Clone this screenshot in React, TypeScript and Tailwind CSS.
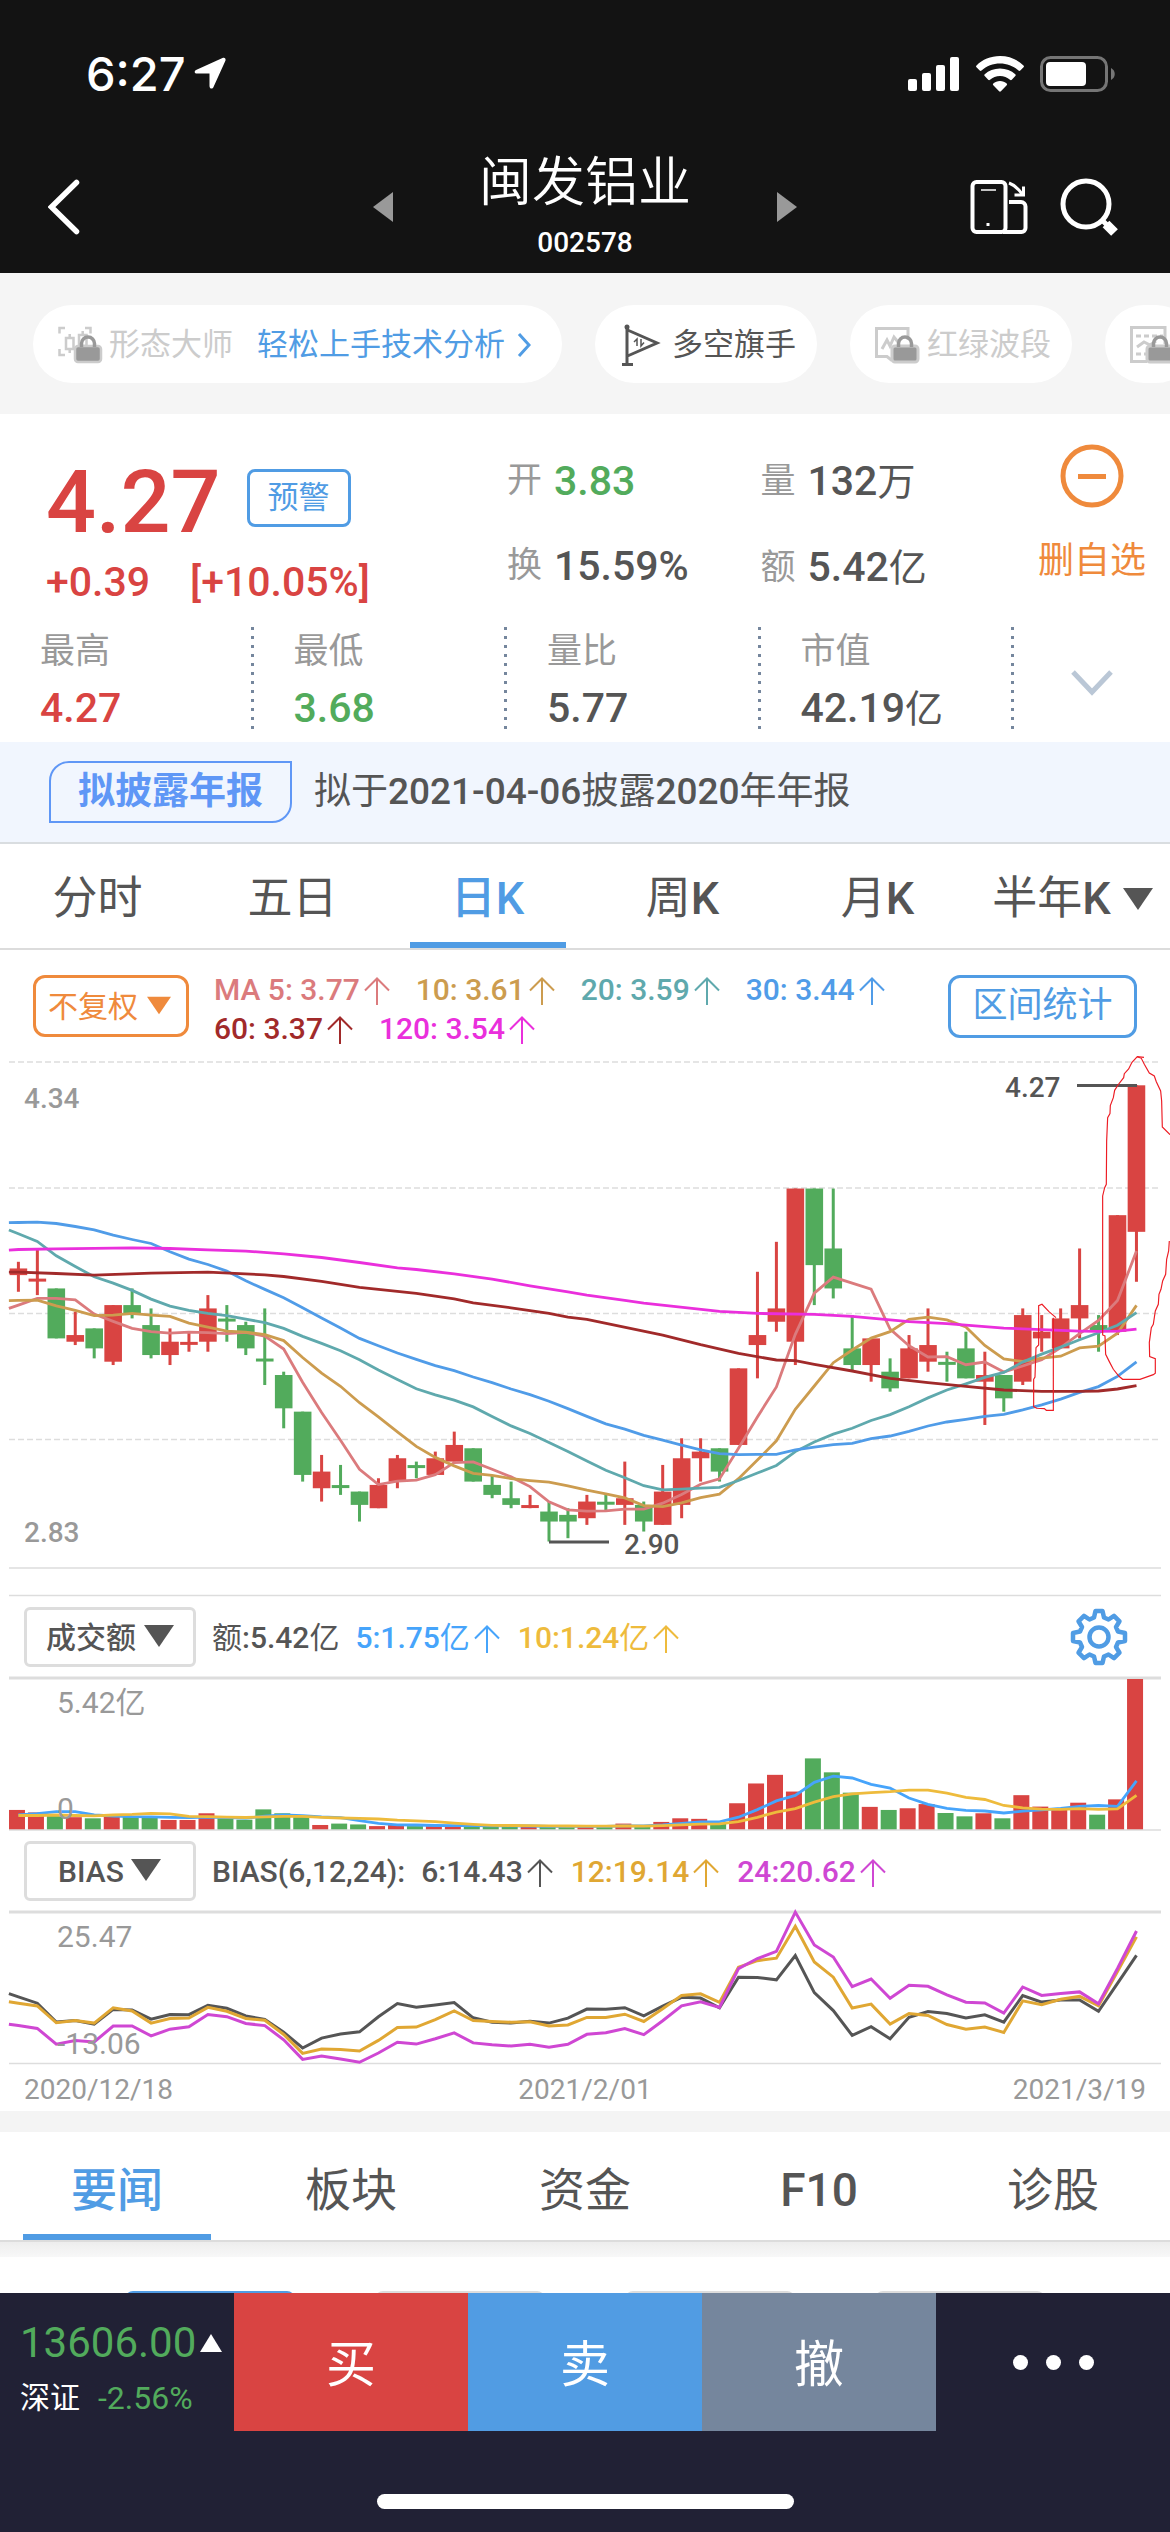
import React, { useState } from 'react';

type Candle = ['r' | 'g', number, number, number, number, number];

// colour, body top, body bottom, high, low, turnover
const CANDLES: Candle[] = [
  ['r', 3.72, 3.7, 3.74, 3.65, 0.72],
  ['r', 3.685, 3.685, 3.78, 3.64, 0.63],
  ['g', 3.66, 3.51, 3.66, 3.51, 0.5],
  ['r', 3.52, 3.5, 3.59, 3.49, 0.46],
  ['g', 3.54, 3.48, 3.54, 3.45, 0.42],
  ['r', 3.61, 3.44, 3.61, 3.43, 0.51],
  ['g', 3.61, 3.58, 3.66, 3.57, 0.5],
  ['g', 3.55, 3.46, 3.6, 3.45, 0.47],
  ['r', 3.5, 3.46, 3.54, 3.43, 0.36],
  ['r', 3.495, 3.495, 3.53, 3.47, 0.36],
  ['r', 3.6, 3.5, 3.64, 3.47, 0.6],
  ['g', 3.565, 3.565, 3.61, 3.5, 0.42],
  ['g', 3.55, 3.48, 3.56, 3.46, 0.37],
  ['g', 3.445, 3.445, 3.6, 3.37, 0.74],
  ['g', 3.4, 3.3, 3.41, 3.24, 0.6],
  ['g', 3.29, 3.1, 3.29, 3.08, 0.46],
  ['r', 3.11, 3.06, 3.16, 3.02, 0.18],
  ['g', 3.065, 3.065, 3.13, 3.04, 0.23],
  ['g', 3.05, 3.01, 3.05, 2.96, 0.2],
  ['r', 3.07, 3.0, 3.09, 3.0, 0.14],
  ['r', 3.15, 3.08, 3.16, 3.06, 0.19],
  ['g', 3.125, 3.125, 3.14, 3.09, 0.14],
  ['r', 3.15, 3.1, 3.17, 3.1, 0.14],
  ['r', 3.19, 3.14, 3.23, 3.14, 0.18],
  ['g', 3.18, 3.08, 3.18, 3.08, 0.14],
  ['g', 3.07, 3.04, 3.1, 3.03, 0.14],
  ['g', 3.03, 3.01, 3.08, 3.0, 0.13],
  ['r', 3.005, 3.005, 3.04, 3.0, 0.13],
  ['g', 2.99, 2.96, 3.02, 2.9, 0.13],
  ['g', 2.98, 2.96, 3.0, 2.91, 0.13],
  ['r', 3.02, 2.97, 3.04, 2.95, 0.13],
  ['g', 3.015, 3.015, 3.04, 2.99, 0.12],
  ['r', 3.03, 3.01, 3.14, 2.95, 0.23],
  ['g', 3.01, 2.96, 3.02, 2.93, 0.12],
  ['r', 3.05, 2.95, 3.13, 2.95, 0.29],
  ['r', 3.15, 3.01, 3.21, 2.97, 0.42],
  ['r', 3.17, 3.15, 3.21, 3.08, 0.4],
  ['g', 3.18, 3.11, 3.18, 3.08, 0.22],
  ['r', 3.42, 3.19, 3.42, 3.19, 0.96],
  ['r', 3.52, 3.49, 3.71, 3.39, 1.67],
  ['r', 3.6, 3.56, 3.8, 3.53, 1.98],
  ['r', 3.96, 3.5, 3.96, 3.43, 1.38],
  ['g', 3.96, 3.73, 3.96, 3.61, 2.57],
  ['g', 3.78, 3.66, 3.96, 3.63, 2.07],
  ['g', 3.48, 3.43, 3.58, 3.41, 1.34],
  ['r', 3.51, 3.43, 3.51, 3.38, 0.83],
  ['g', 3.41, 3.36, 3.45, 3.35, 0.72],
  ['r', 3.48, 3.39, 3.52, 3.39, 0.78],
  ['r', 3.49, 3.44, 3.6, 3.41, 0.93],
  ['g', 3.435, 3.435, 3.47, 3.38, 0.61],
  ['g', 3.48, 3.39, 3.53, 3.39, 0.49],
  ['r', 3.4, 3.38, 3.47, 3.25, 0.6],
  ['g', 3.4, 3.33, 3.4, 3.29, 0.42],
  ['r', 3.58, 3.38, 3.6, 3.37, 1.25],
  ['r', 3.53, 3.51, 3.58, 3.47, 0.84],
  ['r', 3.57, 3.48, 3.6, 3.48, 0.77],
  ['r', 3.61, 3.57, 3.78, 3.51, 0.98],
  ['g', 3.55, 3.53, 3.58, 3.47, 0.55],
  ['r', 3.88, 3.53, 3.88, 3.52, 1.1],
  ['r', 4.27, 3.83, 4.27, 3.68, 5.42],
];

const CLOSES = CANDLES.map(c => (c[0] === 'r' ? c[1] : c[2]));
const AMOUNTS = CANDLES.map(c => c[5]);

const RED = '#d94442';
const GREEN = '#52ab5c';
const STEP = 18.95;

const mean = (list: number[], i: number, n: number) =>
  list.slice(i - n + 1, i + 1).reduce((a, b) => a + b, 0) / n;

// The first values need older sessions, so they come in as a seed
const average = (list: number[], n: number, seed: number[]) =>
  list.map((_, i) => (i < n - 1 ? seed[i] : mean(list, i, n)));

const bias = (n: number, seed: number[]) =>
  CLOSES.map((c, i) => (i < n - 1 ? seed[i] : (c / mean(CLOSES, i, n) - 1) * 100));

const MA5 = average(CLOSES, 5, [3.61, 3.63, 3.63, 3.626]);
const MA10 = average(CLOSES, 10, [3.624, 3.625, 3.608, 3.594, 3.578, 3.58, 3.585, 3.58, 3.576]);
const MA20 = average(CLOSES, 20, [
  3.824, 3.801, 3.758, 3.726, 3.695, 3.676, 3.654, 3.628, 3.607, 3.594,
  3.585, 3.578, 3.568, 3.557, 3.54, 3.516, 3.495, 3.473, 3.446,
]);
const MA30 = average(CLOSES, 30, [
  3.858, 3.859, 3.855, 3.846, 3.836, 3.82, 3.807, 3.795, 3.77, 3.748,
  3.732, 3.712, 3.683, 3.657, 3.632, 3.602, 3.571, 3.541, 3.51, 3.488,
  3.466, 3.447, 3.428, 3.413, 3.394, 3.377, 3.358, 3.341, 3.321,
]);

type Point = [number, number];

const MA60: Point[] = [
  [-0.5, 3.709], [0, 3.709], [2, 3.705], [4, 3.7], [7, 3.706], [10, 3.709], [13, 3.701], [14, 3.696],
  [16, 3.681], [18, 3.663], [21, 3.645], [23, 3.629], [24, 3.617], [26, 3.602], [28, 3.585],
  [29, 3.574], [30, 3.567], [34, 3.52], [36, 3.491], [38, 3.465], [40, 3.445], [41, 3.443],
  [42, 3.432], [44, 3.412], [46, 3.39], [48, 3.377], [50, 3.366], [52, 3.355], [54, 3.351],
  [56, 3.351], [57, 3.352], [58, 3.358], [59, 3.368],
];
const MA120: Point[] = [
  [-0.5, 3.775], [0, 3.777], [2, 3.779], [6, 3.782], [8, 3.78], [10, 3.776], [12, 3.772], [14, 3.764],
  [16, 3.753], [18, 3.738], [20, 3.722], [21, 3.717], [23, 3.704], [25, 3.688], [27, 3.668],
  [29, 3.65], [30, 3.64], [32, 3.624], [33, 3.616], [37, 3.591], [39, 3.585], [42, 3.582],
  [44, 3.576], [45, 3.571], [47, 3.56], [49, 3.554], [52, 3.541], [54, 3.536], [56, 3.532],
  [57, 3.531], [58, 3.532], [59, 3.538],
];

const BIAS6 = bias(6, [3.84, 2.21, -2.61, -2.24, -3.15]);
const BIAS12 = bias(12, [2.21, 1.48, -2.79, -2.24, -2.88, 1.03, 0.21, -2.88, -1.7, -1.61, 1.12]);
const BIAS24 = bias(24, [
  -3.52, -4.24, -8.24, -7.33, -7.7, -3.61, -3.61, -6.15, -4.43, -3.79, -0.7, -1.25,
  -2.97, -3.52, -7.15, -12.15, -11.24, -12.06, -12.88, -10.51, -7.79, -8.24, -6.88,
]);

const AMOUNT5 = average(AMOUNTS, 5, [0.54, 0.59, 0.66, 0.66]);
const AMOUNT10 = average(AMOUNTS, 10, [0.52, 0.52, 0.54, 0.52, 0.51, 0.54, 0.56, 0.6, 0.58]);

const cx = (i: number) => 18.4 + i * STEP;
const priceY = (p: number) => (4.34 - p) * 333;
const amountY = (a: number) => 152 - (a / 5.42) * 151;
const biasY = (b: number) => ((25.47 - b) / 38.53) * 151;

const toPoints = (list: Point[], y: (v: number) => number) =>
  list.map(([i, v]) => `${cx(i).toFixed(1)},${y(v).toFixed(1)}`).join(' ');

const indexed = (list: number[]): Point[] => list.map((v, i) => [i, v] as Point);

// Extends a line half a step to the left edge of the pane
const toEdge = (list: number[]): Point[] => [
  [-0.5, list[0] - (list[1] - list[0]) / 2],
  ...indexed(list),
];

// Figures are medium weight, Chinese characters stay regular
const Mixed: React.FC<{ text: string }> = ({ text }) => (
  <>
    {text.split(/([\u4e00-\u9fff]+)/).filter(Boolean).map((part, i) => (
      <span key={i} className={/[\u4e00-\u9fff]/.test(part) ? 'font-normal' : 'font-medium'}>{part}</span>
    ))}
  </>
);

const Reading: React.FC<{ text: string; tone?: string; up?: boolean }> = ({ text, tone = '', up = true }) => (
  <span className={`whitespace-nowrap ${tone}`}>
    <Mixed text={text} />
    {up && (
      <svg viewBox="0 0 26 28" className="ml-1 mr-0.5 inline-block h-7 w-[26px] align-[-5px]" fill="none" stroke="currentColor" strokeWidth="2" role="img" aria-label="上升">
        <path d="M13 28V2M1 13.500 13 1.500l12 12" />
      </svg>
    )}
  </span>
);

const Triangle: React.FC<{ className?: string }> = ({ className }) => (
  <svg viewBox="0 0 30 22" className={className} fill="currentColor" aria-hidden="true">
    <path d="M0 0h30L15 22z" />
  </svg>
);

const Lock = () => (
  <g fill="#999">
    <rect x="18" y="20" width="26" height="16" rx="3" />
    <path d="M24.500 21v-3.500a6.500 6.500 0 0 1 13 0V21" fill="none" stroke="#999" strokeWidth="3.500" />
  </g>
);

const StatusBar = () => (
  <div className="flex h-[147px] items-center justify-between pl-[86px] pr-[54px]">
    <div className="flex items-center gap-2">
      <span className="font-['Inter',sans-serif] text-[47px] font-medium leading-none">6:27</span>
      <svg viewBox="0 0 32 33" className="h-[33px] w-8" fill="#fff" aria-hidden="true">
        <path d="M28.500 1 2 13c-2 1-1.500 3.500.5 3.500h13V29c0 3 3 3.500 4 1L31.500 3.500C32 1.500 30.500 0 28.500 1z" />
      </svg>
    </div>
    <div className="flex items-center gap-4">
      <svg viewBox="0 0 52 34" className="h-[34px] w-[52px]" fill="#fff" aria-hidden="true">
        <rect x="0" y="22" width="9" height="12" rx="2" />
        <rect x="14" y="16" width="9" height="18" rx="2" />
        <rect x="28" y="8" width="9" height="26" rx="2" />
        <rect x="42" y="0" width="9" height="34" rx="2" />
      </svg>
      <svg viewBox="0 0 48 36" className="h-9 w-12" fill="#fff" aria-hidden="true">
        <path d="M24 0C14.500 0 6.500 3.500.5 9.500c-.6.600-.6 1.200 0 1.800l3.200 3.300c.6.600 1.200.6 1.800 0C10.500 10 17 7.500 24 7.500S37.500 10 42.500 14.600c.6.600 1.200.6 1.800 0l3.200-3.300c.6-.6.600-1.200 0-1.800C41.500 3.500 33.500 0 24 0z" />
        <path d="M24 12.500c-6 0-11.300 2.200-15.300 5.800-.6.600-.6 1.200 0 1.800l3.500 3.600c.6.600 1.200.6 1.800 0 2.700-2.300 6.200-3.700 10-3.700s7.300 1.400 10 3.700c.6.600 1.200.6 1.800 0l3.500-3.600c.6-.6.600-1.200 0-1.800-4-3.600-9.300-5.800-15.300-5.800z" />
        <path d="M24 25c-2.600 0-5 .9-6.700 2.500-.6.500-.5 1.200 0 1.700l5.800 6c.6.600 1.200.6 1.800 0l5.800-6c.5-.5.600-1.200 0-1.700C29 25.900 26.600 25 24 25z" />
      </svg>
      <svg viewBox="0 0 76 36" className="h-9 w-[76px]" aria-hidden="true">
        <rect x="1.500" y="1.500" width="65" height="33" rx="9" fill="none" stroke="#757575" strokeWidth="3" />
        <rect x="6" y="6" width="40" height="24" rx="4" fill="#fff" />
        <path d="M71 12v12c5-2.500 5-9.500 0-12z" fill="#757575" />
      </svg>
    </div>
  </div>
);

const TitleBar = () => (
  <div className="grid grid-cols-[1fr_auto_1fr] items-center pb-2.5 pt-1">
    <button aria-label="返回" className="ml-12 justify-self-start">
      <svg viewBox="0 0 32 56" className="h-14 w-8" fill="none" stroke="#fff" strokeWidth="5.500" strokeLinecap="round" aria-hidden="true">
        <path d="M28.500 3.500 3.500 28l25 24.500" />
      </svg>
    </button>
    <div className="flex w-[424px] items-center justify-between">
      <button aria-label="上一只">
        <svg viewBox="0 0 20 30" className="h-[30px] w-5" fill="#999" aria-hidden="true"><path d="M20 0v30L0 15z" /></svg>
      </button>
      <div className="flex flex-col items-center gap-2">
        <h1 className="text-[53px] font-[350] leading-[64px]">闽发铝业</h1>
        <p className="text-[28px] font-medium leading-10">002578</p>
      </div>
      <button aria-label="下一只">
        <svg viewBox="0 0 20 30" className="h-[30px] w-5" fill="#999" aria-hidden="true"><path d="M0 0v30l20-15z" /></svg>
      </button>
    </div>
    <div className="mr-[50px] flex items-center gap-8 justify-self-end">
      <button aria-label="横屏">
        <svg viewBox="0 0 58 56" className="h-14 w-[58px]" fill="none" stroke="#fff" strokeWidth="4" aria-hidden="true">
          <rect x="2.500" y="3" width="33" height="50" rx="4" />
          <path d="M11 11h15" strokeWidth="1.500" />
          <rect x="16.500" y="44" width="3" height="3" fill="#fff" stroke="none" />
          <path d="M39 23h12a4.500 4.500 0 0 1 4.500 4.500V49a4 4 0 0 1-4 4H33" />
          <path d="M39 4c5.500 2 9.500 6 13.500 11.500" strokeWidth="3" />
          <path d="M53.500 7.500V16h-9" strokeWidth="3" />
        </svg>
      </button>
      <button aria-label="搜索">
        <svg viewBox="0 0 60 60" className="size-[60px]" fill="none" stroke="#fff" aria-hidden="true">
          <circle cx="26" cy="27" r="23" strokeWidth="5" />
          <path d="m42 43 5 5" strokeWidth="5" />
          <path d="m46 47 8.500 8.500" strokeWidth="9.500" />
        </svg>
      </button>
    </div>
  </div>
);

const ToolChips = () => (
  <div className="flex gap-[33px] overflow-hidden bg-[#f5f5f5] pb-[31px] pl-[33px] pt-8 text-[31px]">
    <button className="flex h-[78px] shrink-0 items-center rounded-full bg-white pl-6 pr-[31px] pt-0.5 text-[#ccc]">
      <svg viewBox="0 0 46 38" className="mr-1.5 h-[38px] w-[46px]" fill="none" stroke="#ccc" strokeWidth="2.500" aria-hidden="true">
        <path d="M2.500 7.500V2H8M28 2h5.500v5.500M2.500 23v6H8" />
        <path d="M9 12h7.500v11H9zM12.700 8v4M12.700 23v4M22 9h7.500v11H22zM25.700 5v4" />
        <Lock />
      </svg>
      形态大师
      <span className="ml-6 text-[#509ce4]">轻松上手技术分析</span>
      <svg viewBox="0 0 14 24" className="ml-3 h-6 w-3.5" fill="none" stroke="#509ce4" strokeWidth="3" aria-hidden="true">
        <path d="m2 1 10 11L2 23" />
      </svg>
    </button>
    <button className="flex h-[78px] shrink-0 items-center rounded-full bg-white pl-[26px] pr-[21px] pt-0.5 text-[#555]">
      <svg viewBox="0 0 40 42" className="mr-[11px] h-[42px] w-10" fill="none" stroke="#555" strokeWidth="3" aria-hidden="true">
        <circle cx="6" cy="3" r="2.500" fill="#555" stroke="none" />
        <path d="M6 4v36M1 40.500h11M6.500 6 36 19 6.500 32" />
        <path d="m13 18 3-3v7M20 15v7l3-3.500" strokeWidth="1.500" />
      </svg>
      多空旗手
    </button>
    <button className="flex h-[78px] shrink-0 items-center rounded-full bg-white pl-6 pr-[21px] pt-0.5 text-[#ccc]">
      <svg viewBox="0 0 46 38" className="mr-[7px] h-[38px] w-[46px]" fill="none" stroke="#ccc" strokeWidth="3" aria-hidden="true">
        <path d="M34 14V2.500H2.500v28H13l5 4" />
        <path d="m8 23 5-9 3 6 4-9 4 5" />
        <Lock />
      </svg>
      红绿波段
    </button>
    <button className="flex h-[78px] shrink-0 items-center rounded-full bg-white pl-6 pr-5 pt-0.5 text-[#ccc]" aria-label="更多工具">
      <svg viewBox="0 0 46 38" className="h-[38px] w-[46px]" fill="none" stroke="#ccc" strokeWidth="3" aria-hidden="true">
        <path d="M36 18V1.500H2.500v34H18" />
        <path d="M7 10h27M7 28h10" strokeDasharray="5 3" />
        <path d="m8 21 7-5 6 3 6-4" />
        <Lock />
      </svg>
    </button>
  </div>
);

const Pair: React.FC<{ label: string; value: string; unit?: string; tone?: string }> = ({ label, value, unit, tone = 'text-[#555]' }) => (
  <p className="flex items-center gap-3 leading-[50px]">
    <span className="text-[35px] text-[#999]">{label}</span>
    <span className={`text-[41px] font-medium ${tone}`}>
      {value}
      {unit && <span className="text-[38px] font-normal">{unit}</span>}
    </span>
  </p>
);

const STATS = [
  { label: '最高', value: '4.27', tone: 'text-[#d94442]' },
  { label: '最低', value: '3.68', tone: 'text-[#52ab5c]' },
  { label: '量比', value: '5.77', tone: 'text-[#555]' },
  { label: '市值', value: '42.19', unit: '亿', tone: 'text-[#555]' },
];

const Quote = () => (
  <section className="bg-white pb-2">
    <div className="grid grid-cols-[26fr_13fr_13fr_8fr] pt-[30px]">
      <div className="pl-[46px] pt-[3px] text-[#d94442]">
        <div className="flex items-center gap-[26px]">
          <span className="text-[88px] font-medium leading-[110px]">4.27</span>
          <button className="mb-2 h-[58px] w-[104px] rounded-lg border-[3px] border-[#509ce4] text-[31px] text-[#509ce4]">预警</button>
        </div>
        <p className="flex gap-10 text-[41px] font-medium leading-[50px]">
          <span>+0.39</span>
          <span>[+10.05%]</span>
        </p>
      </div>
      <div className="flex flex-col gap-[35px] pt-3">
        <Pair label="开" value="3.83" tone="text-[#52ab5c]" />
        <Pair label="换" value="15.59%" />
      </div>
      <div className="flex flex-col gap-[35px] pt-3">
        <Pair label="量" value="132" unit="万" />
        <Pair label="额" value="5.42" unit="亿" />
      </div>
      <button className="flex flex-col items-center gap-[26px] pb-4 text-[36px] leading-[54px] text-[#ef8a3c]">
        <svg viewBox="0 0 64 64" className="size-16" fill="none" stroke="currentColor" strokeWidth="5" aria-hidden="true">
          <circle cx="32" cy="32" r="29" />
          <path d="M18 32.500h28" />
        </svg>
        删自选
      </button>
    </div>
    <div className="mt-5 grid grid-cols-[13fr_13fr_13fr_13fr_8fr]">
      {STATS.map(s => (
        <div key={s.label} className="flex justify-between pl-10">
          <div className="leading-[50px]">
            <p className="text-[35px] text-[#999]">{s.label}</p>
            <p className={`mt-[6px] text-[41px] font-medium ${s.tone}`}>
              {s.value}
              {s.unit && <span className="text-[38px] font-normal">{s.unit}</span>}
            </p>
          </div>
          <div className="h-[102px] w-[3px] bg-[repeating-linear-gradient(#75869d_0_3px,transparent_3px_9px)]" />
        </div>
      ))}
      <button aria-label="展开" className="flex items-center justify-center pt-1">
        <svg viewBox="0 0 42 26" className="h-[26px] w-[42px]" fill="none" stroke="#bac7d6" strokeWidth="5" aria-hidden="true">
          <path d="m2 2 19 20L40 2" />
        </svg>
      </button>
    </div>
  </section>
);

const Notice = () => (
  <a href="#report" className="flex h-[102px] items-center gap-[22px] border-b-2 border-[#d9dde0] bg-[#f1f6fe] pl-[49px] text-[37px] text-[#555]">
    <span className="rounded-br-[20px] rounded-tl-[20px] border-2 border-[#5f97f6] px-[27px] font-bold leading-[58px] text-[#5f97f6]">拟披露年报</span>
    <span><Mixed text="拟于2021-04-06披露2020年年报" /></span>
  </a>
);

type TabsProps = {
  items: string[];
  active: number;
  onPick: (i: number) => void;
  menu?: number;
  size: string;
};

const Tabs: React.FC<TabsProps> = ({ items, active, onPick, menu, size }) => (
  <div role="tablist" className="flex border-b-2 border-[#dcdcdc] bg-white">
    {items.map((t, i) => (
      <button
        key={t}
        role="tab"
        aria-selected={i === active}
        onClick={() => onPick(i)}
        className={`flex flex-1 flex-col items-center justify-between ${size} ${i === active ? 'font-medium text-[#509ce4]' : 'text-[#555]'}`}
      >
        <span className="flex items-center gap-3 whitespace-nowrap leading-[74px]">
          <span>{i === active ? t : <Mixed text={t} />}</span>
          {i === menu && <Triangle className="h-[22px] w-[30px]" />}
        </span>
        <span className={`h-1.5 w-4/5 ${i === active ? 'bg-[#509ce4]' : ''}`} />
      </button>
    ))}
  </div>
);

const AVERAGES = [
  { text: 'MA 5: 3.77', tone: 'text-[#db7b7d]' },
  { text: '10: 3.61', tone: 'text-[#cc9c4f]' },
  { text: '20: 3.59', tone: 'text-[#5fa9ad]' },
  { text: '30: 3.44', tone: 'text-[#509ce8]' },
  { text: '60: 3.37', tone: 'text-[#a12a2a]' },
  { text: '120: 3.54', tone: 'text-[#ea2fdc]' },
];

const ChartToolbar = () => (
  <div className="flex h-[112px] items-start px-[33px] pt-5">
    <label className="relative mt-[5px] text-[#ef8a3c]">
      <select aria-label="复权" className="h-[62px] w-[156px] appearance-none rounded-xl border-[3px] border-current pl-3 text-[30px]">
        <option>不复权</option>
      </select>
      <Triangle className="pointer-events-none absolute right-[18px] top-5 h-[21px] w-6" />
    </label>
    <div className="flex flex-1 flex-wrap gap-x-6 pl-[25px] text-[30px] leading-[39px]">
      {AVERAGES.map(a => <Reading key={a.text} text={a.text} tone={a.tone} />)}
    </div>
    <button className="mt-[5px] h-[63px] w-[189px] rounded-xl border-[3px] border-[#509ce4] text-[35px] text-[#509ce4]">区间统计</button>
  </div>
);

const PriceChart = () => (
  <svg viewBox="0 0 1170 534" className="block w-full overflow-visible" fill="none" role="img" aria-label="日K线">
    <g stroke="#ddd" strokeWidth="1.500">
      {[0, 126, 251.5, 377.5].map(y => <path key={y} d={`M9 ${y}H1158`} strokeDasharray="6 3" />)}
      <path d="M9 506H1161M9 533.500H1161" />
    </g>
    {CANDLES.map(([c, top, bottom, high, low], i) => (
      <g key={i} fill={c === 'r' ? RED : GREEN}>
        <rect x={cx(i) - 1.5} y={priceY(high)} width="3" height={priceY(low) - priceY(high)} />
        <rect x={cx(i) - 8.8} y={priceY(top) - (top === bottom ? 1.5 : 0)} width="17.6" height={Math.max(priceY(bottom) - priceY(top), 3)} />
      </g>
    ))}
    <g strokeWidth="2.800">
      <polyline points={toPoints(toEdge(MA5), priceY)} stroke="#db7b7d" />
      <polyline points={toPoints(toEdge(MA10), priceY)} stroke="#cc9c4f" />
      <polyline points={toPoints(toEdge(MA20), priceY)} stroke="#5fa9ad" />
      <polyline points={toPoints(toEdge(MA30), priceY)} stroke="#509ce8" />
      <polyline points={toPoints(MA60, priceY)} stroke="#a12a2a" />
      <polyline points={toPoints(MA120, priceY)} stroke="#ea2fdc" />
    </g>
    <path d="M1077 23.500h60M549 480h60" stroke="#555" strokeWidth="3" />
    <g fontSize="28" fontWeight="500" fill="#999">
      <text x="24" y="46">4.34</text>
      <text x="24" y="480">2.83</text>
      <text x="1005" y="35" fill="#555">4.27</text>
      <text x="624" y="492" fill="#555">2.90</text>
    </g>
    {/* Hand-drawn marks */}
    <g transform="translate(940 -21) scale(.3333)" stroke="#ed1c24" strokeWidth="3.500">
      <path d="M612 49 592 47l-16 17-10 20-13 14-2 12-17 22-10 16-4 22-9 24-1 24-7 12-3 70-1 130-5 10-6 25v417l7 3 2 55 11 22 12 23 17 21 11 9h52l40-14 6-4v-44l-17-6-1-42 6-45 6-10 6-40 9-20 2-30 6-15 5-25 9-20 3-45 6-25 2-30" />
      <path d="m592 47 12 5 9 18 15 26 15 9 6 17 13 28 3 30 2 78 23 23" />
      <path d="m348 830-21-18-21-22-10 4v118l-8 8-3 88-4 7v82l9 5 23 1 6 5h21V830" />
    </g>
  </svg>
);

const PaneHeader: React.FC<{ name: string; arrow: string; children: React.ReactNode; extra?: React.ReactNode }> = ({ name, arrow, children, extra }) => (
  <div className="flex h-[82px] items-center pl-6 pr-[42px] text-[30px] text-[#555]">
    <label className="relative">
      <select aria-label={name} className="h-[60px] w-[172px] appearance-none rounded-md border-[3px] border-[#ddd] pr-[38px] text-center font-medium">
        <option>{name}</option>
      </select>
      <Triangle className={`pointer-events-none absolute top-[18px] h-[22px] w-[30px] ${arrow}`} />
    </label>
    <div className="flex flex-1 gap-4 pl-4">{children}</div>
    {extra}
  </div>
);

const Gear = () => (
  <button aria-label="指标设置">
    <svg viewBox="0 0 58 58" className="size-[58px]" fill="none" stroke="#509ce4" strokeWidth="4.500" strokeLinejoin="round" aria-hidden="true">
      <circle cx="29" cy="29" r="9.500" />
      <path d="M25.500 3h7l1.500 6.500 4.500 2 5.500-3.700 5.500 5.500-3.500 5.700 2 4.500 7 1.500v8l-7 1.500-2 4.500 3.500 5.700-5.500 5.500-5.500-3.700-4.500 2-1.500 6.500h-7L24 48.500l-4.500-2-5.500 3.700-5.500-5.500L12 39l-2-4.500L3 33v-8l7-1.500 2-4.500-3.500-5.700L14 7.800l5.500 3.700 4.500-2z" />
    </svg>
  </button>
);

const AmountChart = () => (
  <svg viewBox="0 0 1170 152" className="block w-full overflow-visible" fill="none" role="img" aria-label="成交额">
    <path d="M9 0H1161" stroke="#ddd" strokeWidth="3" />
    {CANDLES.map(([c, , , , , amount], i) => (
      <rect key={i} x={9 + i * STEP} y={amountY(amount)} width="16" height={152 - amountY(amount)} fill={c === 'r' ? RED : GREEN} />
    ))}
    <g strokeWidth="2.800">
      <polyline points={toPoints(indexed(AMOUNT5), amountY)} stroke="#46a4fb" />
      <polyline points={toPoints(indexed(AMOUNT10), amountY)} stroke="#eebb3c" />
    </g>
    <path d="M9 152H1161" stroke="#ddd" strokeWidth="1.500" />
    <g fontSize="30" fill="#999">
      <text x="57" y="35">5.42亿</text>
      <text x="57" y="141">0</text>
    </g>
  </svg>
);

const BiasChart = () => (
  <svg viewBox="0 0 1170 152" className="block w-full overflow-visible" fill="none" role="img" aria-label="BIAS">
    <path d="M9 0H1161" stroke="#ddd" strokeWidth="3" />
    <path d="M9 151.500H1161" stroke="#ddd" strokeWidth="1.500" />
    <g strokeWidth="3">
      <polyline points={toPoints(toEdge(BIAS6), biasY)} stroke="#555" />
      <polyline points={toPoints(toEdge(BIAS12), biasY)} stroke="#e0a733" />
      <polyline points={toPoints(toEdge(BIAS24), biasY)} stroke="#cf47d3" />
    </g>
    <g fontSize="30" fill="#999">
      <text x="57" y="35">25.47</text>
      <text x="57" y="142">-13.06</text>
    </g>
  </svg>
);

const TradeBar = () => (
  <footer className="bg-[#212135] text-white">
    <div className="grid h-[138px] grid-cols-5">
      <div className="flex flex-col justify-center gap-3 pl-5 pt-3.5">
        <p className="flex items-center gap-1 text-[42px] leading-[46px] text-[#52ab5c]">
          13606.00
          <svg viewBox="0 0 22 18" className="h-[18px] w-[22px]" fill="#fff" aria-hidden="true"><path d="M11 0l11 18H0z" /></svg>
        </p>
        <p className="flex gap-[18px] text-[30px] leading-10">
          深证 <span className="text-[32px] text-[#52ab5c]">-2.56%</span>
        </p>
      </div>
      <button className="bg-[#d94442] pt-1.5 text-[50px]">买</button>
      <button className="bg-[#519ce3] pt-1.5 text-[50px]">卖</button>
      <button className="bg-[#75869d] pt-1.5 text-[50px]">撤</button>
      <button aria-label="更多" className="flex items-center justify-center gap-[18px]">
        <span className="size-[15px] rounded-full bg-white" />
        <span className="size-[15px] rounded-full bg-white" />
        <span className="size-[15px] rounded-full bg-white" />
      </button>
    </div>
    <div className="flex h-[102px] items-end justify-center pb-6">
      <div className="h-[15px] w-[417px] rounded-full bg-white" />
    </div>
  </footer>
);

export default function App() {
  const [period, setPeriod] = useState(2);
  const [section, setSection] = useState(0);

  return (
    <div className="min-h-screen overflow-hidden bg-white font-['Roboto','Noto_Sans_CJK_SC',sans-serif]">
      <header className="bg-[#131313] text-white">
        <StatusBar />
        <TitleBar />
      </header>
      <ToolChips />
      <Quote />
      <Notice />
      <Tabs items={['分时', '五日', '日K', '周K', '月K', '半年K']} active={period} onPick={setPeriod} menu={5} size="h-[104px] pt-[18px] text-[45px]" />

      <section className="bg-white">
        <ChartToolbar />
        <PriceChart />
        <PaneHeader name="成交额" arrow="left-[120px]" extra={<Gear />}>
          <Reading text="额:5.42亿" up={false} />
          <Reading text="5:1.75亿" tone="text-[#46a4fb]" />
          <Reading text="10:1.24亿" tone="text-[#eebb3c]" />
        </PaneHeader>
        <AmountChart />
        <PaneHeader name="BIAS" arrow="left-[107px]">
          <Reading text="BIAS(6,12,24):" up={false} />
          <Reading text="6:14.43" />
          <Reading text="12:19.14" tone="text-[#e0a733]" />
          <Reading text="24:20.62" tone="text-[#cf47d3]" />
        </PaneHeader>
        <BiasChart />
        <div className="grid h-[47px] grid-cols-3 items-center px-6 pt-1 text-[28px] text-[#999]">
          <span>2020/12/18</span>
          <span className="text-center">2021/2/01</span>
          <span className="text-right">2021/3/19</span>
        </div>
      </section>

      <div className="h-[21px] bg-[#f4f4f4]" />
      <Tabs items={['要闻', '板块', '资金', 'F10', '诊股']} active={section} onPick={setSection} size="h-[108px] pt-[21px] text-[46px]" />
      <div className="h-[15px] bg-linear-to-b from-[#ededed] to-[#f8f8f8]" />
      <div className="grid h-9 grid-cols-4 gap-20 overflow-hidden px-[125px] pt-[34px]">
        <div className="h-14 rounded-lg bg-[#509ce4]" />
        <div className="h-14 rounded-lg bg-[#ddd]" />
        <div className="h-14 rounded-lg bg-[#ddd]" />
        <div className="h-14 rounded-lg bg-[#ddd]" />
      </div>
      <TradeBar />
    </div>
  );
}
